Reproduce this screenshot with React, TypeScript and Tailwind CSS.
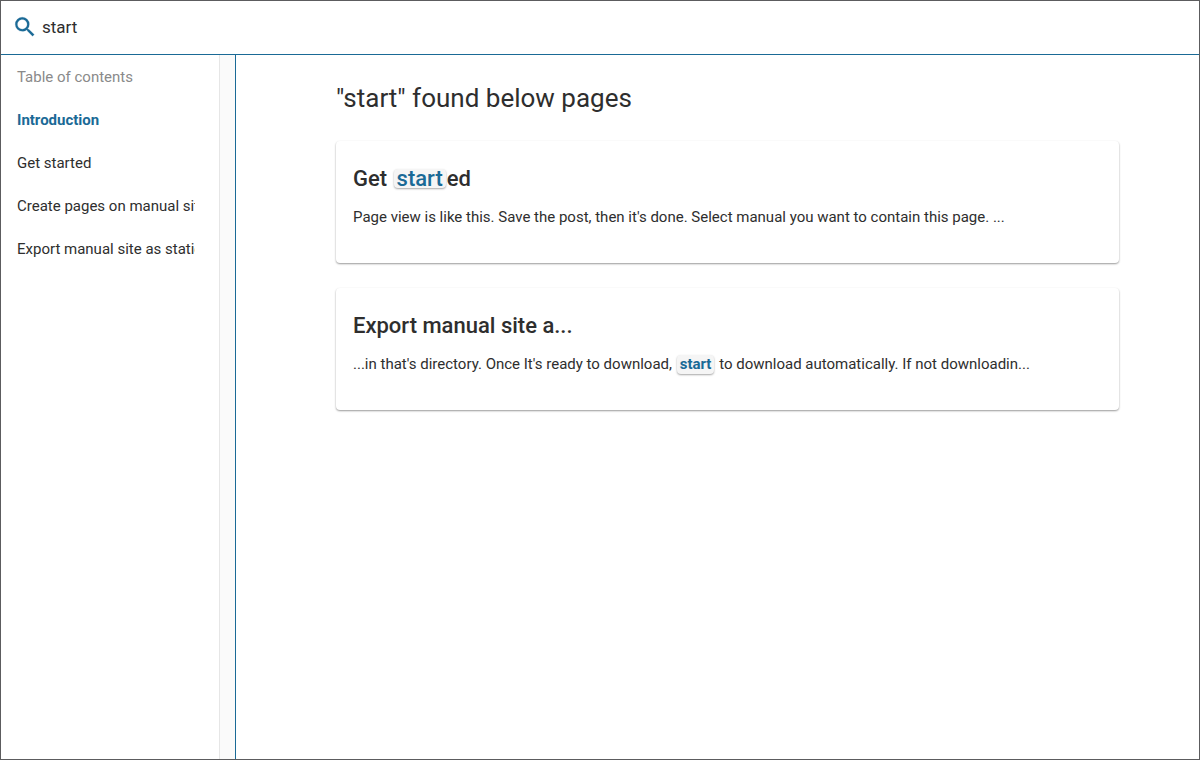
import type { ReactNode } from "react";

type Result = { id: string; title: ReactNode; excerpt: ReactNode };

const pages = [
  { id: "introduction", label: "Introduction", current: true },
  { id: "get-started", label: "Get started", current: false },
  { id: "create-pages", label: "Create pages on manual site", current: false },
  { id: "export", label: "Export manual site as static", current: false },
];

function Mark({ strong = false, children }: { strong?: boolean; children: ReactNode }) {
  return (
    <mark
      className={`mx-px inline-block rounded-sm bg-[#f5f5f5] px-[3px] leading-[19px] text-[#1a6a96] shadow-[0_1px_2px_rgba(0,0,0,0.35)] ${
        strong ? "font-bold" : "font-medium"
      }`}
    >
      {children}
    </mark>
  );
}

const results: Result[] = [
  {
    id: "get-started",
    title: (
      <>
        Get <Mark>start</Mark>ed
      </>
    ),
    excerpt:
      "Page view is like this. Save the post, then it's done. Select manual you want to contain this page. ...",
  },
  {
    id: "export",
    title: "Export manual site a...",
    excerpt: (
      <>
        ...in that's directory. Once It's ready to download, <Mark strong>start</Mark> to download
        automatically. If not downloadin...
      </>
    ),
  },
];

function SearchIcon() {
  return (
    <svg
      viewBox="0 0 24 24"
      className="size-[26px] shrink-0 fill-[#1a6a96] stroke-[#1a6a96] stroke-[0.2]"
      aria-hidden="true"
    >
      <path d="M15.5 14h-.79l-.28-.27A6.47 6.47 0 0 0 16 9.5 6.5 6.5 0 1 0 9.5 16c1.61 0 3.09-.59 4.23-1.57l.27.28v.79l5 4.99L20.49 19l-4.99-5zm-6 0C7.01 14 5 11.99 5 9.5S7.01 5 9.5 5 14 7.01 14 9.5 11.99 14 9.5 14z" />
    </svg>
  );
}

export default function App() {
  return (
    <div className="flex min-h-screen flex-col border border-[#5c5c5e] bg-white font-['Roboto',sans-serif] text-[15px] leading-[23px] text-[#2e2e2e]">
      <header className="flex h-[54px] items-center border-b border-[#1a6a96] px-[11px] pb-px">
        <label htmlFor="search" aria-label="Search">
          <SearchIcon />
        </label>
        <input
          id="search"
          type="text"
          defaultValue="start"
          className="ml-1 min-w-0 flex-1 bg-transparent text-[17px] outline-none"
        />
      </header>
      <div className="flex flex-1">
        <nav
          aria-label="Table of contents"
          className="flex w-[235px] shrink-0 border-r border-[#1a6a96]"
        >
          <div className="min-w-0 flex-1 pt-[11px] pr-6 pl-4">
            <p className="text-[#8a8a8a]">Table of contents</p>
            <ul className="mt-5 space-y-5">
              {pages.map((page) => (
                <li key={page.id} className="overflow-hidden whitespace-nowrap">
                  <a
                    href={`#${page.id}`}
                    aria-current={page.current ? "page" : undefined}
                    className={page.current ? "font-bold text-[#1a6a96]" : ""}
                  >
                    {page.label}
                  </a>
                </li>
              ))}
            </ul>
          </div>
          <div className="w-4 border-l border-[#e6e6e6] bg-[#fafafa]" />
        </nav>
        <main className="min-w-0 flex-1 pt-6 pr-20 pl-[100px]">
          <h1 className="text-[26px] leading-[38px]">"start" found below pages</h1>
          <div className="mt-6 flex flex-col gap-[25px]">
            {results.map((result) => (
              <a
                key={result.id}
                href={`#${result.id}`}
                className="block rounded-sm px-[17px] pt-[23px] pb-8 shadow-[0_1px_2px_rgba(0,0,0,0.4)]"
              >
                <h2 className="text-[22px] leading-[30px] font-medium">{result.title}</h2>
                <p className="mt-2.5 truncate py-0.5">{result.excerpt}</p>
              </a>
            ))}
          </div>
        </main>
      </div>
    </div>
  );
}
